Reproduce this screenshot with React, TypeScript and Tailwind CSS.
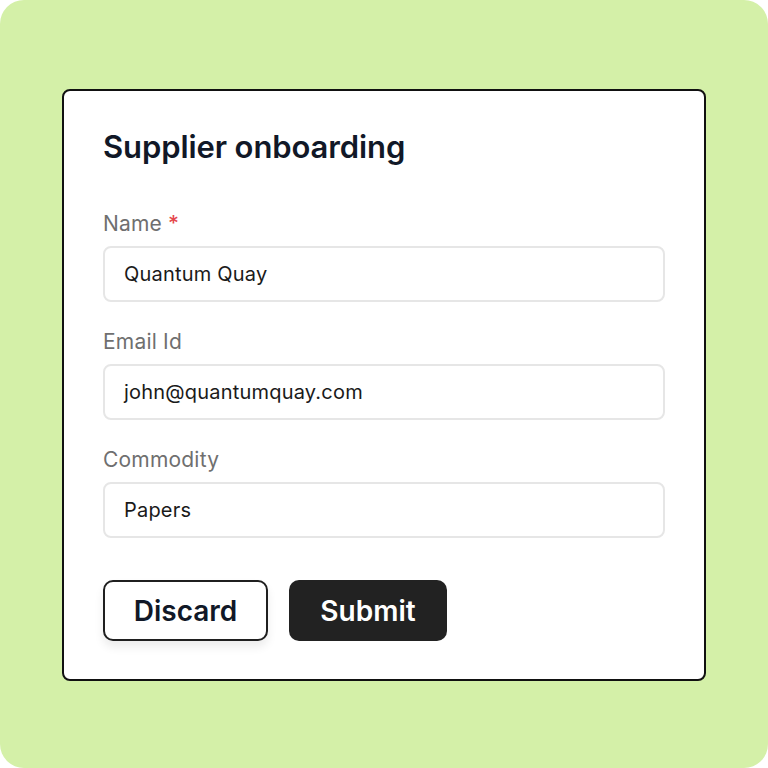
import React from "react";

const fields = [
  { label: "Name", value: "Quantum Quay", required: true },
  { label: "Email Id", value: "john@quantumquay.com" },
  { label: "Commodity", value: "Papers" },
];

export default function App() {
  return (
    <div className="flex h-[768px] w-[768px] items-start justify-center bg-white">
      <div
        className="flex h-[768px] w-[768px] items-start justify-center rounded-[24px] bg-[#d4f0a8] pt-[89px]"
        style={{ fontFamily: "Inter, 'Noto Sans', sans-serif" }}
      >
        <div className="flex w-[644px] flex-col rounded-[8px] border-2 border-[#111111] bg-white px-[39px] pb-[38px] pt-[38px]">
          <h1 className="text-[31px] leading-[36px] font-semibold tracking-[-0.1px] text-[#111827]">
            Supplier onboarding
          </h1>

          <div className="mt-[47px] flex flex-col gap-[28px]">
            {fields.map((f) => (
              <div key={f.label} className="flex flex-col gap-[10px]">
                <label className="text-[21px] leading-[24px] tracking-[0.2px] text-[#6f6f6f]">
                  {f.label}
                  {f.required && <span className="ml-[6px] font-medium text-[#e5484d]">*</span>}
                </label>
                <div className="flex h-[56px] items-center rounded-[8px] border-2 border-[#e6e6e6] px-[19px] text-[20px] tracking-[0.2px] text-[#1a1a1a]">
                  {f.value}
                </div>
              </div>
            ))}
          </div>

          <div className="mt-[42px] flex gap-[21px]">
            <button className="h-[61px] w-[165px] rounded-[10px] border-2 border-[#1f1f1f] bg-white text-[28px] font-semibold text-[#111827] shadow-[0_6px_10px_rgba(0,0,0,0.08)]">
              Discard
            </button>
            <button className="h-[61px] w-[158px] rounded-[10px] bg-[#222222] text-[28px] font-semibold text-white">
              Submit
            </button>
          </div>
        </div>
      </div>
    </div>
  );
}
